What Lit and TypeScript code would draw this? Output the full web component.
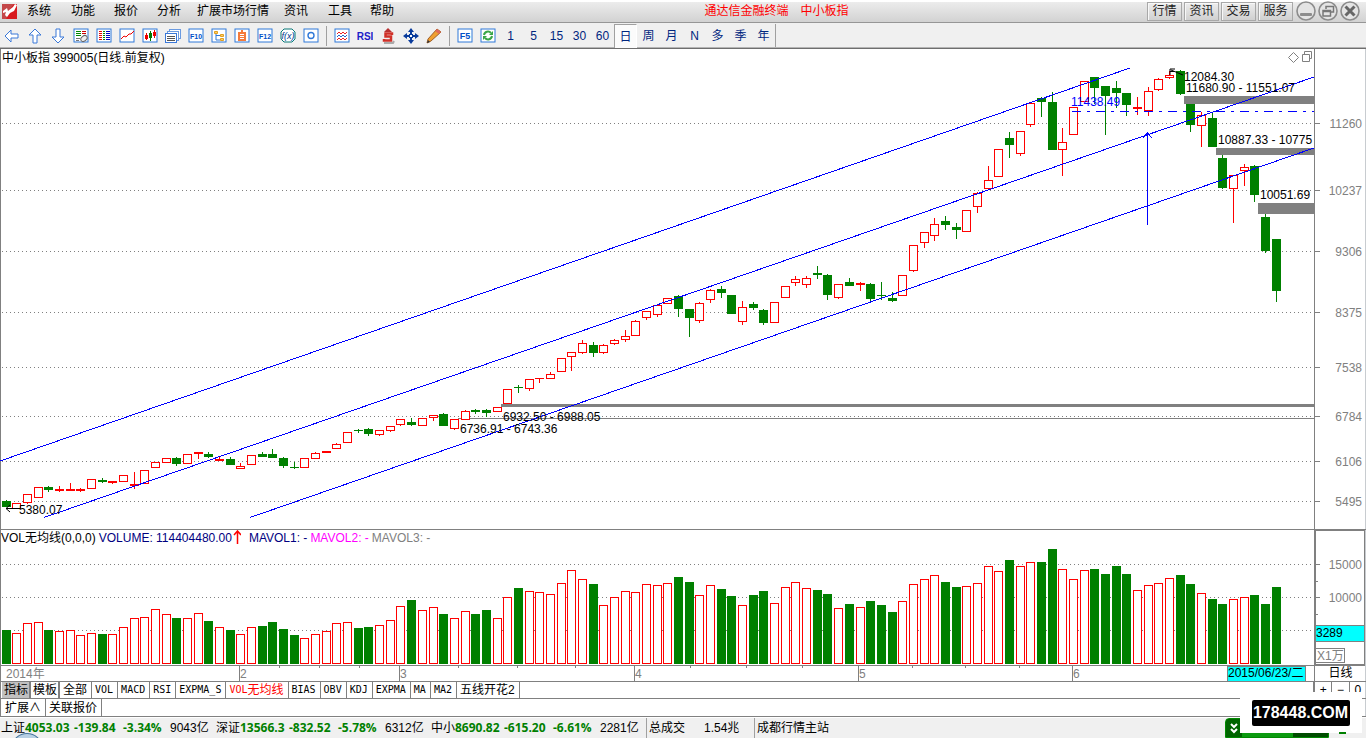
import { LitElement, html, svg, css } from "lit";
import { customElement, property, state } from "lit/decorators.js";
import { classMap } from "lit/directives/class-map.js";

type Dir = "R" | "G";
// direction, high, body top, body bottom, low, volume top
type Day = [Dir, number, number, number, number, number];

const DAYS: Day[] = [
  ["G", 500, 501, 507, 507, 630], ["R", 503, 503, 509, 509, 633], ["R", 494, 494, 503, 504, 623],
  ["R", 487, 487, 498, 498, 622], ["G", 486, 487, 490, 492, 630], ["R", 486, 489, 491, 492, 631],
  ["R", 483, 489, 491, 491, 630], ["R", 488, 489, 491, 492, 635], ["R", 479, 479, 489, 489, 633],
  ["G", 478, 480, 482, 483, 634], ["R", 481, 481, 483, 484, 634], ["R", 475, 475, 482, 482, 627],
  ["R", 472, 484, 486, 489, 618], ["R", 470, 470, 484, 484, 617], ["R", 462, 462, 468, 468, 609],
  ["R", 458, 458, 463, 463, 614], ["G", 457, 458, 464, 466, 618], ["R", 454, 454, 464, 464, 618],
  ["R", 452, 452, 454, 459, 613], ["G", 452, 454, 457, 458, 621], ["R", 457, 459, 461, 461, 627],
  ["G", 457, 459, 465, 465, 630], ["R", 463, 466, 469, 469, 634], ["R", 455, 455, 465, 465, 627],
  ["G", 452, 454, 457, 457, 626], ["G", 449, 454, 458, 458, 622], ["G", 457, 458, 466, 468, 629],
  ["G", 462, 467, 468, 469, 635], ["R", 458, 458, 468, 468, 638], ["R", 452, 453, 459, 459, 634],
  ["R", 451, 451, 453, 453, 631], ["R", 443, 444, 449, 449, 623], ["R", 432, 432, 443, 443, 622],
  ["G", 429, 430, 431, 433, 628], ["G", 428, 429, 434, 436, 627], ["R", 430, 430, 435, 436, 625],
  ["R", 426, 426, 431, 432, 620], ["R", 419, 419, 425, 426, 606], ["G", 418, 422, 425, 426, 600],
  ["R", 418, 418, 426, 426, 610], ["R", 415, 415, 418, 421, 607], ["G", 413, 414, 426, 426, 614],
  ["R", 419, 419, 429, 430, 618], ["R", 410, 411, 420, 420, 611], ["G", 409, 410, 412, 414, 614],
  ["G", 409, 410, 413, 417, 610], ["R", 407, 407, 412, 412, 618], ["R", 389, 389, 404, 404, 597],
  ["G", 385, 387, 388, 393, 588], ["R", 379, 379, 389, 391, 591], ["R", 378, 378, 379, 383, 592],
  ["R", 372, 374, 379, 379, 594], ["R", 358, 358, 372, 372, 583], ["R", 352, 352, 357, 371, 570],
  ["R", 340, 343, 353, 354, 579], ["G", 342, 345, 353, 357, 584], ["R", 344, 345, 353, 354, 605],
  ["R", 339, 340, 344, 345, 597], ["R", 330, 336, 340, 342, 591], ["R", 320, 321, 336, 336, 592],
  ["R", 311, 311, 318, 320, 584], ["R", 305, 305, 315, 317, 585], ["R", 298, 298, 304, 304, 583],
  ["G", 295, 296, 309, 317, 577], ["G", 309, 309, 318, 337, 582], ["R", 302, 303, 321, 323, 595],
  ["R", 289, 290, 300, 303, 585], ["G", 286, 289, 293, 298, 589], ["G", 295, 295, 314, 314, 596],
  ["R", 301, 307, 322, 325, 605], ["G", 302, 304, 308, 310, 595], ["G", 309, 310, 323, 325, 591],
  ["R", 302, 302, 323, 323, 603], ["R", 286, 286, 298, 298, 587], ["R", 276, 279, 283, 286, 582],
  ["R", 276, 278, 285, 288, 588], ["G", 266, 273, 275, 279, 590], ["G", 274, 275, 295, 300, 594],
  ["R", 284, 284, 298, 299, 608], ["G", 278, 282, 286, 286, 604], ["R", 282, 283, 285, 291, 607],
  ["G", 283, 284, 299, 303, 601], ["G", 282, 295, 296, 300, 605], ["G", 292, 298, 301, 302, 612],
  ["R", 275, 275, 296, 296, 601], ["R", 245, 245, 271, 272, 584], ["R", 232, 232, 243, 248, 579],
  ["R", 218, 224, 236, 241, 575], ["G", 216, 221, 225, 230, 582], ["G", 223, 227, 230, 239, 587],
  ["R", 210, 210, 232, 232, 586], ["R", 192, 193, 207, 213, 583], ["R", 166, 180, 189, 189, 566],
  ["R", 149, 149, 177, 177, 571], ["G", 132, 138, 145, 158, 560], ["R", 131, 131, 154, 156, 566],
  ["R", 103, 103, 125, 127, 562], ["G", 97, 98, 102, 117, 562], ["G", 92, 102, 150, 150, 549],
  ["R", 128, 142, 150, 176, 569], ["R", 107, 107, 135, 135, 579], ["R", 81, 81, 102, 102, 570],
  ["G", 77, 77, 88, 104, 569], ["G", 86, 86, 96, 135, 574], ["G", 81, 88, 93, 108, 566],
  ["G", 93, 93, 105, 116, 574], ["R", 97, 107, 109, 115, 590], ["R", 87, 91, 111, 116, 585],
  ["R", 78, 79, 90, 91, 583], ["R", 71, 75, 78, 79, 578], ["G", 70, 71, 94, 95, 575],
  ["G", 104, 104, 125, 132, 584], ["R", 112, 115, 126, 147, 593], ["G", 113, 118, 147, 147, 599],
  ["G", 155, 158, 188, 189, 604], ["R", 175, 175, 189, 223, 599], ["R", 164, 167, 171, 186, 597],
  ["G", 165, 166, 195, 202, 595], ["G", 214, 217, 251, 253, 604], ["G", 239, 239, 291, 302, 587],
];
const PRICES: [string, number][] = [
  ["11260", 123], ["10237", 190], ["9306", 251], ["8375", 312],
  ["7538", 367], ["6784", 416], ["6106", 461], ["5495", 501],
];
const BAR_STEP = 10.675;
const barX = (i: number) => 2 + Math.floor(i * BAR_STEP);
const ink = (d: Dir) => (d === "R" ? "#ff0000" : "#008000");

const gridLine = (y: number) => svg`<line class="grid" x1="2" x2="100%" y1=${y + 0.5} y2=${y + 0.5}></line>`;

const candle = ([d, high, top, bottom, low]: Day, i: number) => {
  const x = barX(i);
  const h = Math.max(bottom - top, 1);
  const hollow = d === "R" && h > 2;
  return svg`
    ${high < top ? svg`<rect x=${x + 4} y=${high} width="1" height=${top - high} fill=${ink(d)}></rect>` : ""}
    ${low > bottom ? svg`<rect x=${x + 4} y=${bottom} width="1" height=${low - bottom} fill=${ink(d)}></rect>` : ""}
    ${hollow
      ? svg`<rect x=${x + 0.5} y=${top + 0.5} width="8" height=${h - 1} fill="#fff" stroke=${ink(d)}></rect>`
      : svg`<rect x=${x} y=${top} width="9" height=${h} fill=${ink(d)}></rect>`}`;
};

const volumeBar = (day: Day, i: number) => {
  const x = barX(i);
  const top = day[5];
  return day[0] === "R"
    ? svg`<rect x=${x + 0.5} y=${top + 0.5} width="8" height=${663 - top} fill="#fff" stroke="#ff0000"></rect>`
    : svg`<rect x=${x} y=${top} width="9" height=${664 - top} fill="#008000"></rect>`;
};

const base = css`
  :host { display: block; font: 12px/16px "Liberation Sans", "Noto Sans CJK SC", sans-serif; color: #000; }
  * { box-sizing: border-box; }
  svg { display: block; }
  button { font: inherit; color: inherit; margin: 0; padding: 0; border: 0; background: none; white-space: nowrap; }
`;

/* ---------- menu bar ---------- */
@customElement("menu-bar")
class MenuBar extends LitElement {
  static styles = [base, css`
    .bar { display: flex; align-items: center; height: 23px; border-bottom: 1px solid #969696;
      background: linear-gradient(#fff 0, #fff 2px, #ececec 2px, #d2d2d2 100%); }
    .logo { margin: 0 8px 0 2px; flex: none; }
    .menu { display: grid; grid-template-columns: 44px 43px 43px 40px 87px 44px 42px 24px; }
    .menu button { text-align: left; }
    .title { flex: 1; display: flex; justify-content: center; gap: 12px; padding-left: 12px; color: #f00; white-space: nowrap; }
    .links { display: flex; gap: 2px; margin-right: 3px; }
    .links button { width: 35px; height: 19px; border: 1px solid #a8a8a8; background: linear-gradient(#ededed, #d0d0d0); color: #222; box-shadow: inset 1px 1px #f8f8f8; }
    .window { display: flex; gap: 2px; margin-right: 6px; }
  `];
  render() {
    const ring = svg`<circle cx="10" cy="10" r="9" fill="#e4e4e4" stroke="#8c8c8c" stroke-width="1.6"></circle>`;
    return html`<header class="bar">
      <svg class="logo" width="17" height="17" viewBox="0 0 17 17" aria-hidden="true">
        <rect y="1" width="15" height="15" fill="#d81a1e"></rect>
        <path d="M0 1h12L8 6l1 1-5 9H0z" fill="#c4484a"></path>
        <path d="M1 8l4-3 1 3 5-4 2-3 2 1-3 6-4 2-3 4-2-2 1-3-3 1z" fill="#fff"></path>
      </svg>
      <nav class="menu">${["系统", "功能", "报价", "分析", "扩展市场行情", "资讯", "工具", "帮助"].map((t) => html`<button>${t}</button>`)}</nav>
      <div class="title"><span>通达信金融终端</span><span>中小板指</span></div>
      <div class="links">${["行情", "资讯", "交易", "服务"].map((t) => html`<button>${t}</button>`)}</div>
      <div class="window">
        <button aria-label="最小化"><svg width="20" height="20">${ring}<rect x="4" y="12" width="12" height="3" rx="1" fill="#8c8c8c"></rect></svg></button>
        <button aria-label="还原"><svg width="20" height="20">${ring}<path d="M8 8V5.500h7.500V11H13M5 9.500h7.500V15H5zM5 10.500h7.500" fill="none" stroke="#777" stroke-width="1.500"></path></svg></button>
        <button aria-label="关闭"><svg width="20" height="20">${ring}<path d="M5.500 5.500l9 9M14.500 5.500l-9 9" stroke="#666" stroke-width="3"></path></svg></button>
      </div>
    </header>`;
  }
}

/* ---------- toolbar ---------- */
const frame = svg`<rect x="1" y="1" width="14" height="13" fill="#fff" stroke="#2f78d8"></rect>`;
const framedText = (t: string) => svg`${frame}<text x="8" y="11" text-anchor="middle" font-size=${t.length > 2 ? 7 : 9} font-weight="bold" fill="#0050c8">${t}</text>`;
const ICONS: [string, unknown][] = [
  ["后退", svg`<path d="M1 8l6-6v4h7v4H7v4z" fill="#fff" stroke="#3a78d8"></path>`],
  ["上", svg`<path d="M8 1l6 6h-4v8H6V7H2z" fill="#fff" stroke="#3a78d8"></path>`],
  ["下", svg`<path d="M8 15l6-6h-4V1H6v8H2z" fill="#fff" stroke="#3a78d8"></path>`],
  ["自选", svg`${frame}<path d="M3 3.500h5M3 5.500h5M3 7.500h5" stroke="#080"></path><path d="M9 3.500h4M9 5.500h4" stroke="#c00"></path><path d="M3 10.500h4M3 12.500h3" stroke="#777"></path><ellipse cx="11" cy="10.500" rx="3.500" ry="2.500" transform="rotate(-40 11 10.500)" fill="#eee" stroke="#666"></ellipse>`],
  ["行情表", svg`${frame}<path d="M3 3.500h3M3 5.500h3M3 7.500h3M3 9.500h3M3 11.500h3" stroke="#e00"></path><path d="M7 3.500h2M7 5.500h2M7 7.500h2M7 9.500h2M7 11.500h2" stroke="#080"></path><path d="M10 3.500h4M10 5.500h4M10 7.500h4M10 9.500h4M10 11.500h4" stroke="#00c"></path>`],
  ["分时", svg`${frame}<path d="M2 11l3-3 2 1 3-3h2l3-3" fill="none" stroke="#e00"></path>`],
  ["K线", svg`${frame}<path d="M4.500 5v7M12.500 2v8" stroke="#e00"></path><path d="M8.500 3v10" stroke="#070"></path><path d="M3 7h3v4H3zM11 4h3v4h-3z" fill="#e00"></path><path d="M7 5h3v5H7z" fill="#070"></path>`],
  ["多股", svg`<rect x="4.500" y="1.500" width="11" height="9" fill="#fff" stroke="#6a9ae0"></rect><rect x="2.500" y="3.500" width="11" height="9" fill="#fff" stroke="#6a9ae0"></rect><rect x=".5" y="5.500" width="11" height="9" fill="#fff" stroke="#3a78d8"></rect><path d="M2 8.500h8M2 10.500h8M2 12.500h8" stroke="#555"></path>`],
  ["F10", framedText("F10")],
  ["板块", svg`${frame}<path d="M5 5v7h4M5 7.500h4" fill="none" stroke="#2f78d8"></path><path d="M3.500 3.500h3v2h-3zM9.500 6.500h3v2h-3zM9.500 10.500h3v2h-3z" fill="#fc6" stroke="#e0a020"></path>`],
  ["自选股", svg`${frame}<rect x="4" y="4" width="8" height="9" fill="#f47b3c"></rect><rect x="7" y="2" width="2" height="2" fill="#f47b3c"></rect><path d="M6 6.500h4M6 8.500h4M6 10.500h4" stroke="#fff"></path>`],
  ["F12", framedText("F12")],
  ["公式", svg`<path d="M4 1h8l3 3v7l-3 3H4l-3-3V4z" fill="#fff" stroke="#0a7878"></path><text x="8" y="11" text-anchor="middle" font-size="9" font-style="italic" fill="#003a90">f(x)</text>`],
  ["画面", svg`${frame}<circle cx="8" cy="7.500" r="3" fill="none" stroke="#2f78d8" stroke-width="1.400"></circle>`],
  ["|", null],
  ["叠加", svg`${frame}<path d="M3 6l2-2 2 2 2-2 2 2 2-2" fill="none" stroke="#e22"></path><path d="M3 9l2-2 2 2 2-2 2 2 2-2" fill="none" stroke="#26c"></path><path d="M3 12l2-2 2 2 2-2 2 2 2-2" fill="none" stroke="#e22"></path>`],
  ["RSI", svg`<text x="8" y="12" text-anchor="middle" font-size="10" font-weight="bold" fill="#1c1cc8">RSI</text>`],
  ["除权", svg`<path d="M4 15h9l1-2" fill="none" stroke="#aaa" stroke-width="2"></path><path d="M12 7V5.500H5.500v3h5.500v4H4V11" fill="none" stroke="#d03028" stroke-width="2.500"></path><path d="M8 0l4 4H4z" fill="#b83030"></path>`],
  ["移动", svg`<path d="M8 0l3 4H5zM8 16l3-4H5zM0 8l4-3v6zM16 8l-4-3v6z" fill="#0a3c9c"></path><path d="M8 3v10M3 8h10" stroke="#0a3c9c" stroke-width="2"></path><rect x="6.500" y="6.500" width="3" height="3" fill="#fff" stroke="#0a3c9c"></rect>`],
  ["画线", svg`<path d="M1 15l1-4L11 1l4 3L5 13z" fill="#f0a030" stroke="#a0602a"></path><path d="M11 1l4 3-2 2-4-3z" fill="#e06a5a"></path><path d="M1 15l1-3 2 2z" fill="#333"></path>`],
  ["|", null],
  ["F5", framedText("F5")],
  ["刷新", svg`${frame}<path d="M4 7a4 4 0 0 1 7-2M12 8a4 4 0 0 1-7 2" fill="none" stroke="#3aa648" stroke-width="2"></path><path d="M13 3v4H9zM3 12V8h4z" fill="#3aa648"></path>`],
];

@customElement("tool-bar")
class ToolBar extends LitElement {
  @state() period = "日";
  static styles = [base, css`
    .bar { display: flex; height: 26px; padding-top: 1px; background: #f0f0f0; border-bottom: 1px solid #6e6e6e; box-shadow: inset 0 -1px #b4b4b4; }
    button { width: 23px; height: 24px; display: flex; align-items: center; justify-content: center; color: #00267f; }
    .sep { width: 8px; display: flex; justify-content: center; padding: 2px 0; }
    .sep::before, .end { content: ""; width: 1px; background: #a0a0a0; }
    .end { margin-bottom: 1px; }
    .on { background: #fbfbfb; border: 1px solid #a0a0a0; border-right-color: #fff; border-bottom: 0; }
  `];
  render() {
    return html`<div class="bar">
      ${ICONS.map(([name, art]) => name === "|" ? html`<span class="sep"></span>`
        : html`<button aria-label=${name}><svg width="16" height="16" viewBox="0 0 16 16">${art}</svg></button>`)}
      ${["1", "5", "15", "30", "60", "日", "周", "月", "N", "多", "季", "年"].map((t) => html`
        <button class=${classMap({ on: t === this.period })} @click=${() => (this.period = t)}>${t}</button>`)}
      <span class="end"></span>
    </div>`;
  }
}

/* ---------- charts ---------- */
@customElement("price-chart")
class PriceChart extends LitElement {
  static styles = [base, css`
    .row { display: grid; grid-template-columns: minmax(0, 1fr) 51px; height: 480px; }
    .plot { border-right: 1px solid #808080; }
    .grid { stroke: #808080; stroke-dasharray: 1 3; }
    .trend { stroke: #0000ff; fill: none; }
    .band { fill: #808080; }
    .black { stroke: #000; fill: none; }
    .grey { stroke: #808080; fill: none; }
    .blue { fill: #0000ff; }
    .axis { fill: #808080; text-anchor: end; }
  `];
  render() {
    return html`<div class="row">
      <svg class="plot" width="100%" height="480" role="img" aria-label="中小板指 日线"><g transform="translate(0,-49)">
        ${PRICES.map(([, y]) => gridLine(y))}
        <rect class="band" x="501" y="404" width="100%" height="3"></rect>
        <rect class="band" x="458" y="418" width="100%" height="1"></rect>
        <rect class="band" x="1184" y="96" width="100%" height="8"></rect>
        <rect class="band" x="1216" y="148" width="100%" height="7"></rect>
        <rect class="band" x="1258" y="203" width="100%" height="11"></rect>
        ${DAYS.map(candle)}
        <g class="trend" shape-rendering="crispEdges">
          <path d="M0 461L1130 68M44 517.500L1314 77M250 517.500L1314 148"></path>
          <path d="M1147.500 225V134M1143 138l4.500-5 4.500 5"></path>
        </g>
        <line class="trend" x1="1072" x2="100%" y1="111.500" y2="111.500" stroke-dasharray="9 6 3 6"></line>
        <path class="black" d="M20 508.500H6M10 505l-4 3.500 4 3.500M1183 75l-12-5M1170 75v-6h5M1170 71.500h4"></path>
        <text x="2" y="62">中小板指 399005(日线.前复权)</text>
        <text x="19" y="514">5380.07</text>
        <text x="503" y="421">6932.50 - 6988.05</text>
        <text x="460" y="433">6736.91 - 6743.36</text>
        <text class="blue" x="1071" y="106">11438.49</text>
        <text x="1184" y="81">12084.30</text>
        <text x="1186" y="92">11680.90 - 11551.07</text>
        <text x="1218" y="144">10887.33 - 10775</text>
        <text x="1260" y="199">10051.69</text>
        <path class="grey" d="M1293.500 52.500l5 5-5 5-5-5zM1302.500 54.500h7v7h-7zM1304.500 54v-2.500h7v7h-2"></path>
      </g></svg>
      <svg width="100%" height="480"><g transform="translate(0,-49)">
        ${PRICES.map(([t, y]) => svg`<path class="grey" d="M0 ${y + 0.5}h5"></path><text class="axis" x="47" y=${y + 5}>${t}</text>`)}
      </g></svg>
    </div>`;
  }
}

@customElement("volume-chart")
class VolumeChart extends LitElement {
  static styles = [base, css`
    .row { display: grid; grid-template-columns: minmax(0, 1fr) 52px; border-top: 1px solid #808080; }
    .main { border-bottom: 1px solid #808080; }
    .head { display: flex; gap: 3px; height: 16px; padding-left: 1px; white-space: nowrap; }
    .head svg { margin: 0 5px 0 -3px; }
    .navy { color: #000080; }
    .pink { color: #ff00ff; }
    .dim { color: #808080; }
    .grid { stroke: #808080; stroke-dasharray: 1 3; }
    .side { border: 2px solid #808080; border-top-width: 1px; border-right-width: 1px; margin-right: 1px; }
    .grey { stroke: #808080; fill: none; }
    .axis { fill: #808080; text-anchor: end; }
    .dates { height: 16px; border-bottom: 1px solid #808080; }
    .dates text { fill: #808080; }
    .dates .now { fill: #000; }
    .cyan { fill: #00ffff; stroke: #808080; }
    .name { height: 16px; border-left: 1px solid #808080; border-bottom: 1px solid #808080; text-align: center; line-height: 15px; }
    .foot { display: grid; grid-template-columns: minmax(0, 1fr) 52px; }
  `];
  render() {
    const months: [string, number][] = [["2", 239], ["3", 399], ["4", 634], ["5", 858], ["6", 1072]];
    const weeks = [279, 319, 359, 458, 517, 575, 690, 746, 802, 912, 965, 1019];
    return html`<section class="row">
      <div class="main">
        <div class="head"><span>VOL无均线(0,0,0)</span><span class="navy">VOLUME: 114404480.00</span>
          <svg width="9" height="16"><path d="M5.500 14V1M2 5l3.500-4L9 5" fill="none" stroke="#f00" stroke-width="1.500"></path></svg>
          <span class="navy">MAVOL1: -</span><span class="pink">MAVOL2: -</span><span class="dim">MAVOL3: -</span></div>
        <svg width="100%" height="119" role="img" aria-label="成交量"><g transform="translate(0,-546)">
          ${[564, 597, 630].map(gridLine)}${DAYS.map(volumeBar)}
        </g></svg>
      </div>
      <div class="side"><svg width="100%" height="133"><g transform="translate(0,-531)">
        <path class="grey" d="M0 564.500h4M0 581.500h2M0 597.500h4M0 614.500h2"></path>
        <text class="axis" x="46" y="569">15000</text><text class="axis" x="46" y="602">10000</text>
        <rect class="cyan" x="-.5" y="625.500" width="60" height="16"></rect><text x="0" y="637">3289</text>
        <rect class="grey" x="-.5" y="648.500" width="29" height="14"></rect><text x="1" y="660" fill="#808080">X1万</text>
      </g></svg></div>
    </section>
    <div class="foot">
      <svg class="dates" width="100%" height="16">
        ${weeks.map((x) => svg`<path class="grey" d="M${x + 0.5} 0v2"></path>`)}
        ${months.map(([t, x]) => svg`<path class="grey" d="M${x + 0.5} 0v16"></path><text x=${x + 1} y="12">${t}</text>`)}
        <text x="6" y="12">2014年</text>
        <rect class="cyan" x="1227.500" y=".5" width="78" height="15"></rect>
        <text class="now" x="1228" y="11">2015/06/23/二</text>
      </svg>
      <div class="name">日线</div>
    </div>`;
  }
}

/* ---------- indicator tabs ---------- */
@customElement("indicator-tabs")
class IndicatorTabs extends LitElement {
  @property() current = "VOL无均线";
  static styles = [base, css`
    .row { display: flex; align-items: stretch; height: 17px; border-bottom: 1px solid #808080; padding-left: 2px; }
    .row.second { height: 18px; }
    button { display: flex; align-items: center; height: 16px; padding: 0 4px 0 3px; border-right: 1px solid #808080; }
    .second button { height: 17px; }
    .mono { font: 10px/16px "DejaVu Sans Mono", monospace; }
    .wide { padding: 0 1px 0 2px; border-right-width: 2px; }
    .picked { background: #c0c0c0; }
    .red { color: #f00; }
    .zoom { margin-left: auto; display: flex; width: 53px; border-left: 2px solid #808080; }
    .zoom button { flex: 1; padding: 0; justify-content: center; }
    .zoom button:last-child { border: 0; }
  `];
  render() {
    const tabs: [string, string][] = [["", "全部"], ["VOL", ""], ["MACD", ""], ["RSI", ""], ["EXPMA_S", ""], ["VOL", "无均线"],
      ["BIAS", ""], ["OBV", ""], ["KDJ", ""], ["EXPMA", ""], ["MA", ""], ["MA2", ""], ["", "五线开花2"]];
    return html`<div class="row">
      <button class="wide picked">指标</button><button class="wide">模板</button>
      ${tabs.map(([a, b]) => html`<button class=${classMap({ red: a + b === this.current })}
        @click=${() => (this.current = a + b)}><span class="mono">${a}</span>${b}</button>`)}
      <div class="zoom"><button>+</button><button>−</button><button>0</button></div>
    </div>
    <div class="row second"><button>扩展∧</button><button>关联报价</button></div>`;
  }
}

/* ---------- status bar ---------- */
@customElement("status-bar")
class StatusBar extends LitElement {
  static styles = [base, css`
    .bar { position: relative; display: flex; align-items: center; height: 21px; padding-left: 1px; background: #f0f0f0; border-top: 1px solid #fff; white-space: nowrap; }
    .quote { display: grid; grid-template-columns: 24px 49px 49px 47px 46px; }
    .num { color: #008000; font: bold 12px/16px "Open Sans", sans-serif; }
    .cell { border-left: 1px solid #a0a0a0; padding-left: 2px; height: 20px; line-height: 20px; }
    .total { display: flex; gap: 19px; width: 108px; }
    .orb { position: absolute; left: 12px; bottom: -22px; width: 30px; height: 27px; border-radius: 50%; border: 1px solid #44749c; background: #b8d0e4; }
    .orbclip { position: absolute; inset: 0; overflow: hidden; pointer-events: none; }
    .widget { position: absolute; right: 37px; bottom: 0; width: 104px; height: 20px; border-radius: 4px 4px 0 0; background: linear-gradient(90deg, #006400 0 16px, #0c9a10 16px 66%, #004c00 66%); border: 1px solid #008a00; }
    .dash { position: absolute; right: 20px; bottom: 4px; width: 7px; height: 2px; background: #008000; }
    .mark { position: absolute; right: 4px; bottom: 5px; width: 122px; height: 41px; background: #fff; display: flex; align-items: center; justify-content: center; padding-right: 1px; }
    .plate { width: 98px; height: 26px; background: #000; color: #fff; text-align: center; font: bold 16px/26px "Liberation Sans", sans-serif; border-radius: 2px; }
  `];
  render() {
    const quotes = [["上证", "4053.03", "-139.84", "-3.34%", "9043亿"], ["深证", "13566.3", "-832.52", "-5.78%", "6312亿"], ["中小", "8690.82", "-615.20", "-6.61%", "2281亿"]];
    return html`<footer class="bar">
      ${quotes.map(([n, p, c, r, v]) => html`<div class="quote"><span>${n}</span><span class="num">${p}</span><span class="num">${c}</span><span class="num">${r}</span><span>${v}</span></div>`)}
      <div class="cell total"><span>总成交</span><span>1.54兆</span></div>
      <div class="cell">成都行情主站</div>
      <div class="orbclip"><div class="orb"></div>
        <div class="widget"><svg width="16" height="18"><path d="M5 5l3 3 3-3M5 10l3 3 3-3" fill="none" stroke="#fff" stroke-width="2"></path></svg></div></div>
      <div class="mark"><div class="plate">178448.COM</div></div>
      <div class="dash"></div>
    </footer>`;
  }
}

@customElement("app-root")
class AppRoot extends LitElement {
  static styles = css`
    :host { display: block; min-height: 100vh; background: #fff; overflow: hidden; }
    .app { display: flex; flex-direction: column; border-left: 1px solid #808080; border-right: 1px solid #c8ccd0; }
    .app > * { margin: 0 -1px; }
  `;
  render() {
    return html`<main class="app">
      <menu-bar></menu-bar><tool-bar></tool-bar><price-chart></price-chart>
      <volume-chart></volume-chart><indicator-tabs></indicator-tabs><status-bar></status-bar>
    </main>`;
  }
}
